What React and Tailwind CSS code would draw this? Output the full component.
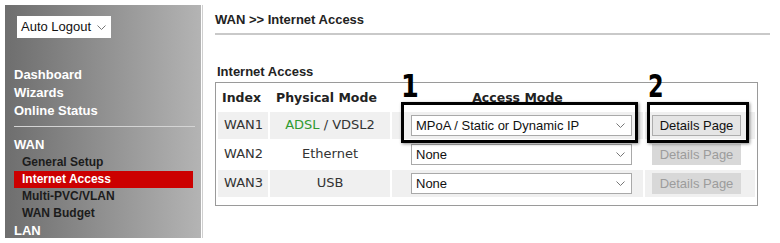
import React from "react";

const Chevron = ({ className = "" }) => (
  <svg width="9" height="5" viewBox="0 0 9 5" className={className}>
    <path d="M0.5 0.5 L4.5 4.5 L8.5 0.5" fill="none" stroke="#777" strokeWidth="1" />
  </svg>
);

const Select = ({ value }) => (
  <div className="ml-[19px] w-[221px] h-[21px] bg-white border border-[#a9a9a9] flex items-center justify-between pl-[4px] pr-[6px] text-[13px] text-[#111] font-['Liberation_Sans',Arial,sans-serif]">
    <span>{value}</span>
    <Chevron />
  </div>
);

const Btn = ({ disabled }) => (
  <div
    className={
      "ml-[7px] w-[89px] h-[21px] flex items-center justify-center text-[13px] font-['Liberation_Sans',Arial,sans-serif] " +
      (disabled
        ? "bg-[#d8d8d8] text-[#9c9c9c]"
        : "bg-[#e5e5e5] border border-[#adadad] text-[#111]")
    }
  >
    Details Page
  </div>
);

const rows = [
  { idx: "WAN1", mode: "adsl", sel: "MPoA / Static or Dynamic IP", dis: false, bg: "bg-[#f0f0f0]" },
  { idx: "WAN2", mode: "Ethernet", sel: "None", dis: true, bg: "bg-white" },
  { idx: "WAN3", mode: "USB", sel: "None", dis: true, bg: "bg-[#f0f0f0]" },
];

export default function App() {
  return (
    <div className="relative w-[780px] h-[243px] bg-white flex overflow-hidden font-['Liberation_Sans',Arial,sans-serif]">
      <aside className="mt-[5px] ml-[5px] w-[196px] h-[233px] shrink-0 bg-linear-to-r from-[#6e6e6e] to-[#b4b4b4] pl-[9px] pt-[11px] flex flex-col overflow-hidden">
        <div className="shrink-0 ml-[3px] w-[94px] h-[22px] bg-white flex items-center justify-between pl-[4px] pr-[5px] text-[13px] text-[#111]">
          <span>Auto Logout</span>
          <Chevron />
        </div>
        <div className="shrink-0 mt-[28px] flex flex-col text-[13px] font-bold text-white leading-[18px]">
          <span>Dashboard</span>
          <span>Wizards</span>
          <span>Online Status</span>
        </div>
        <div className="shrink-0 mt-[6px] w-[181px] h-px bg-[#d4d4d4]" />
        <div className="shrink-0 mt-[9px] text-[13px] font-bold text-white leading-[18px]">WAN</div>
        <div className="shrink-0 flex flex-col text-[12px] font-bold text-[#1c1c1c] leading-[17px]">
          <span className="pl-[8px]">General Setup</span>
          <span className="pl-[8px] w-[179px] bg-[#cc0000] text-white">Internet Access</span>
          <span className="pl-[8px]">Multi-PVC/VLAN</span>
          <span className="pl-[8px]">WAN Budget</span>
        </div>
        <div className="shrink-0 text-[13px] font-bold text-white leading-[18px]">LAN</div>
      </aside>

      <main className="ml-px mt-[5px] h-[233px] border-l border-[#cfcfcf] pl-[12px] flex flex-col">
        <div className="shrink-0 mt-[7px] text-[13px] font-bold text-[#222] leading-[16px]">WAN &gt;&gt; Internet Access</div>
        <div className="shrink-0 mt-[5px] w-[555px] h-[2px] bg-[#c9c9c9]" />
        <div className="shrink-0 mt-[29px] ml-[2px] text-[13px] font-bold text-[#222] leading-[16px]">Internet Access</div>
        <div className="shrink-0 mt-[2px] w-[543px] border border-[#9a9a9a] pb-[6px]">
          <table className="border-separate border-spacing-[2px] font-['DejaVu_Sans',Verdana,sans-serif]">
            <thead>
              <tr className="h-[25px] text-[12.5px] font-bold text-[#222]">
                <th className="w-[50px] p-0 text-left pl-[4px] font-bold pt-[2px]">Index</th>
                <th className="w-[120px] p-0 text-left pl-[6px] font-bold pt-[2px]">Physical Mode</th>
                <th className="w-[251px] p-0 font-bold pt-[2px]">Access Mode</th>
                <th className="w-[110px] p-0"></th>
              </tr>
            </thead>
            <tbody>
              {rows.map((r) => (
                <tr key={r.idx} className="h-[27px] text-[13px] text-[#333]">
                  <td className={r.bg + " p-0 pl-[6px] pb-[2px]"}>{r.idx}</td>
                  <td className={r.bg + " p-0 text-center pb-[2px]"}>
                    {r.mode === "adsl" ? (
                      <span>
                        <span className="text-[#2f9a2f]">ADSL</span> / VDSL2
                      </span>
                    ) : (
                      r.mode
                    )}
                  </td>
                  <td className={r.bg + " p-0"}>
                    <Select value={r.sel} />
                  </td>
                  <td className={r.bg + " p-0"}>
                    <Btn disabled={r.dis} />
                  </td>
                </tr>
              ))}
            </tbody>
          </table>
        </div>
      </main>

      <div className="absolute left-[401px] top-[102px] w-[237px] h-[41px] border-[3px] border-black shadow-[1px_1px_3px_rgba(0,0,0,0.45)]" />
      <div className="absolute left-[647px] top-[102px] w-[102px] h-[41px] border-[3px] border-black shadow-[1px_1px_3px_rgba(0,0,0,0.45)]" />
      <div className="absolute left-[401px] top-[68px] text-[32px] leading-[36px] font-bold text-black font-['DejaVu_Sans',sans-serif] scale-x-[0.8] origin-left">1</div>
      <div className="absolute left-[648px] top-[68px] text-[32px] leading-[36px] font-bold text-black font-['DejaVu_Sans',sans-serif] scale-x-[0.7] origin-left">2</div>
    </div>
  );
}
